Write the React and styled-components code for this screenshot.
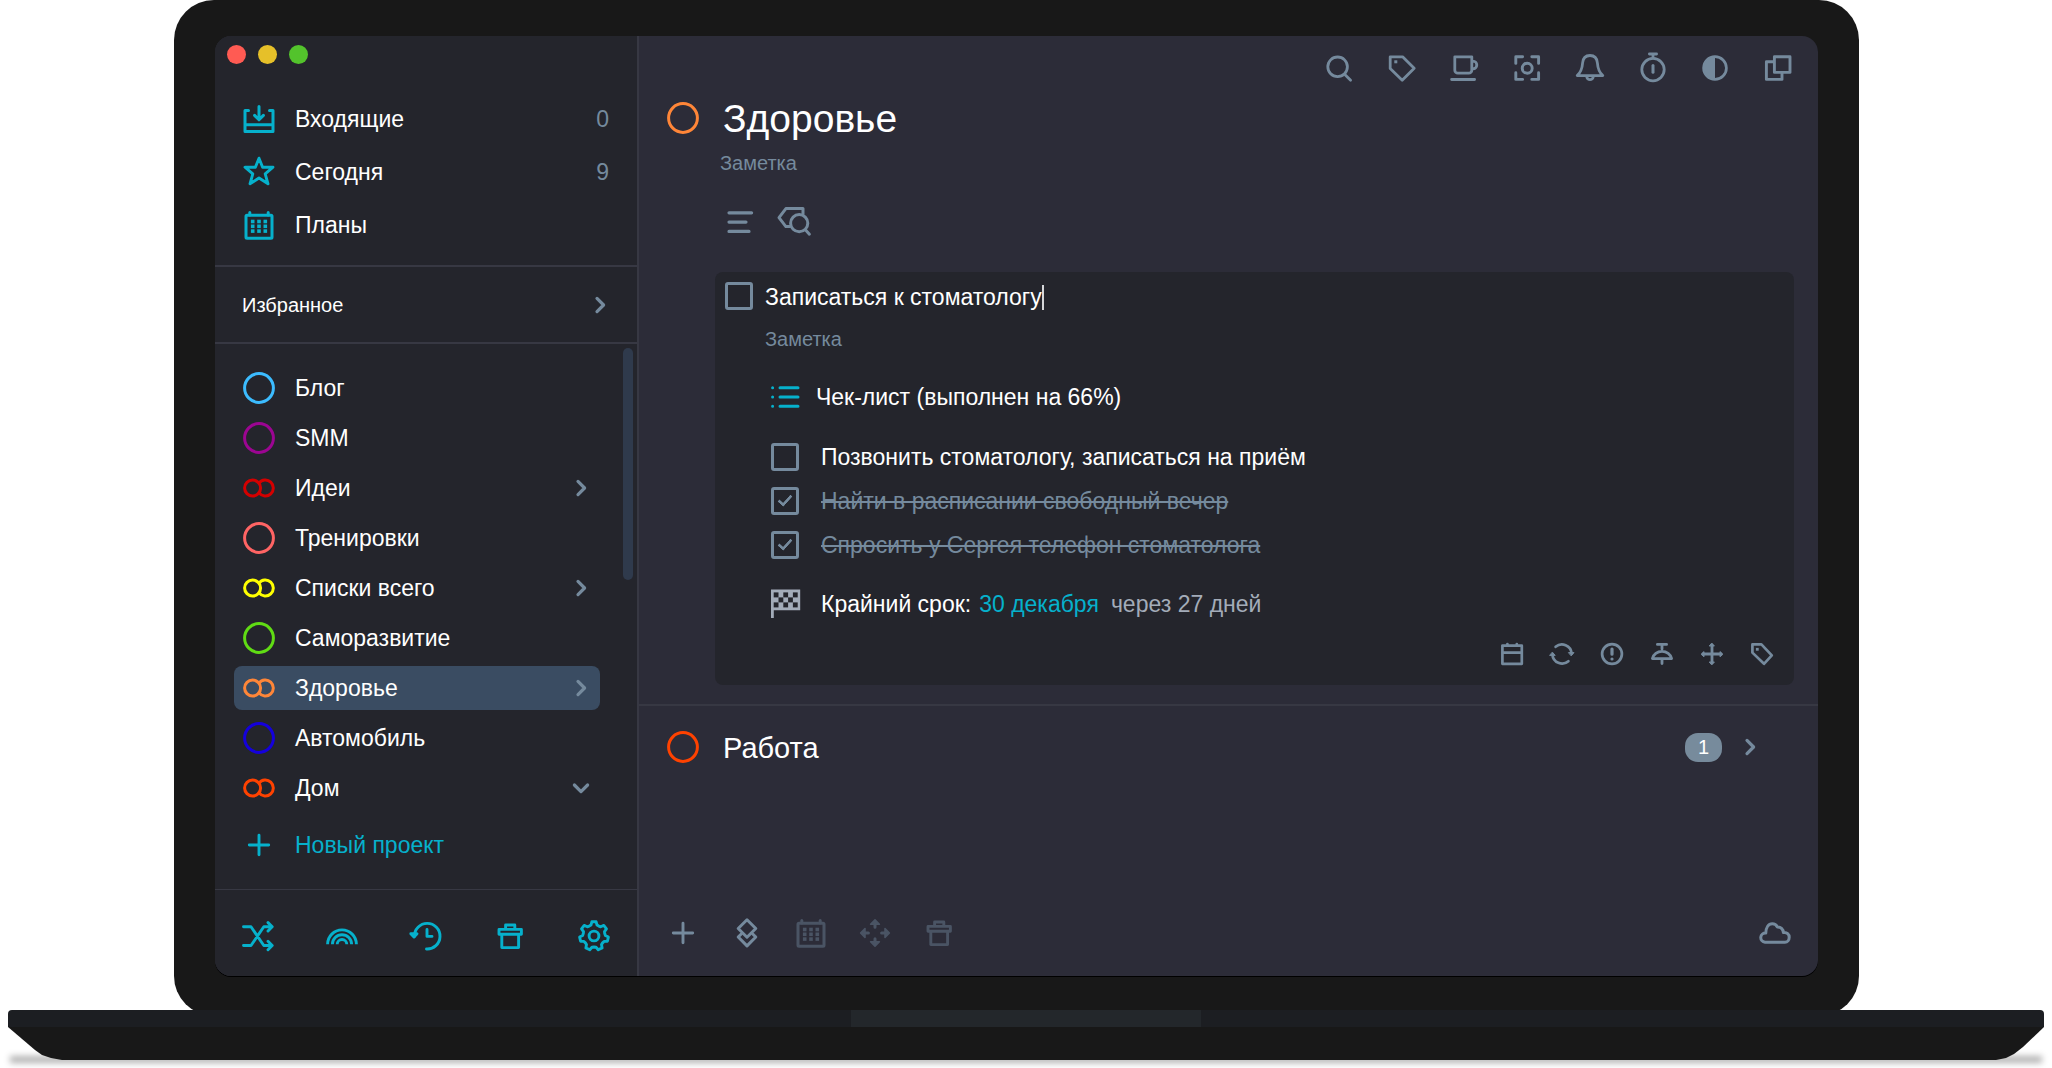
/**
 *
 * Planner window inside a laptop frame
 */

/* System imports */
import React, { useState } from 'react';
import styled, { createGlobalStyle, css } from 'styled-components';

const colors = {
  accent: '#06b1cc',
  muted: '#758a9d',
  disabled: '#4a5464',
  line: '#373843',
  sidebar: '#24252c',
  main: '#2c2c38',
  bezel: '#181818',
};

const GlobalStyle = createGlobalStyle`
  *, *::before, *::after {
    box-sizing: border-box;
  }

  body {
    margin: 0;
    background: #fff;
    color: #fff;
    font-family: 'Liberation Sans', Arial, Helvetica, sans-serif;
    font-size: 23px;
    line-height: 26px;
  }

  button, input {
    margin: 0;
    padding: 0;
    border: 0;
    background: none;
    color: inherit;
    font: inherit;
    outline: none;
  }

  button {
    cursor: pointer;
    text-align: left;
  }

  h1, h2, h3, p, ul {
    margin: 0;
    padding: 0;
    font-weight: normal;
    list-style: none;
  }
`;

/* Laptop */
const Laptop = styled.div`
  min-height: 100vh;
  padding-bottom: 8px;
  display: flex;
  flex-direction: column;
`;

const Lid = styled.div`
  flex: 1;
  display: flex;
  margin: 0 193px -6px 174px;
  padding: 36px 41px 40px;
  border-radius: 40px;
  background: ${colors.bezel};
`;

const Screen = styled.div`
  flex: 1;
  min-width: 0;
  display: flex;
  border-radius: 16px;
  overflow: hidden;
  background: ${colors.main};
  box-shadow: 0 1px 0 #000;
`;

const Base = styled.div`
  position: relative;
  margin: 0 8px;

  &::before {
    content: '';
    position: absolute;
    left: 2px;
    right: 2px;
    bottom: -3px;
    height: 7px;
    background: rgba(0, 0, 0, 0.3);
    filter: blur(3px);
  }
`;

const BaseTop = styled.div`
  position: relative;
  height: 17px;
  display: flex;
  justify-content: center;
  border-radius: 4px 4px 0 0;
  background: #1c1e22;
`;

const BaseNotch = styled.div`
  width: 350px;
  background: #23272b;
`;

const BaseBody = styled.div`
  position: relative;
  height: 33px;
  background: ${colors.bezel};
  clip-path: polygon(
    0 0, 27px 23px, 34px 28px, 43px 31px, 54px 33px,
    calc(100% - 48px) 33px, calc(100% - 38px) 31px, calc(100% - 30px) 27px, calc(100% - 21px) 20px, 100% 0
  );
`;

/* Sidebar */
const Sidebar = styled.aside`
  flex: none;
  width: 424px;
  display: flex;
  flex-direction: column;
  border-right: 2px solid ${colors.line};
  background: ${colors.sidebar};
`;

const TitleBar = styled.div`
  height: 56px;
  padding: 9px 12px;
  display: flex;
  gap: 12px;
`;

const Light = styled.button`
  width: 19px;
  height: 19px;
  border-radius: 50%;
  background: ${(props) => props.$color};
`;

const Nav = styled.nav`
  padding-bottom: 14px;
  border-bottom: 2px solid ${colors.line};
`;

const NavRow = styled.button`
  width: 100%;
  height: 53px;
  padding: 0 28px;
  display: flex;
  align-items: center;
  gap: 20px;
`;

const NavIcon = styled.span`
  color: ${colors.accent};
`;

const RowLabel = styled.span`
  flex: 1;
`;

const Count = styled.span`
  color: ${colors.muted};
`;

const Favorites = styled.button`
  height: 77px;
  padding: 0 25px 0 27px;
  display: flex;
  align-items: center;
  border-bottom: 2px solid ${colors.line};
  font-size: 20px;
`;

const Projects = styled.div`
  flex: 1;
  position: relative;
  padding: 22px 37px 22px 19px;
  display: flex;
  flex-direction: column;
  gap: 13px;
`;

const ProjectList = styled.ul`
  display: flex;
  flex-direction: column;
  gap: 6px;
`;

const ProjectRow = styled.button`
  width: 100%;
  height: 44px;
  padding: 0 7px 0 9px;
  display: flex;
  align-items: center;
  gap: 20px;
  border-radius: 8px;
  background: ${(props) => (props.$active ? '#3a4c62' : 'transparent')};
  color: ${(props) => (props.$accent ? colors.accent : 'inherit')};
`;

const ScrollThumb = styled.div`
  position: absolute;
  top: 4px;
  right: 4px;
  width: 10px;
  height: 232px;
  border-radius: 5px;
  background: #2f3a4c;
`;

const SidebarFooter = styled.footer`
  height: 87px;
  padding: 5px 27px 0;
  display: flex;
  align-items: center;
  justify-content: space-between;
  border-top: 1px solid ${colors.line};
  color: ${colors.accent};
`;

/* Main area */
const Main = styled.main`
  flex: 1;
  min-width: 0;
  display: flex;
  flex-direction: column;
`;

const IconButton = styled.button`
  display: flex;
  color: ${(props) => (props.disabled ? colors.disabled : 'inherit')};
`;

const TopBar = styled.div`
  height: 64px;
  padding-right: 24px;
  display: flex;
  align-items: center;
  justify-content: flex-end;
  color: ${colors.muted};
`;

const TopIcons = styled.div`
  width: 471px;
  display: flex;
  justify-content: space-between;
`;

const HeadRow = styled.div`
  height: 36px;
  padding: 0 56px 0 28px;
  display: flex;
  align-items: center;
`;

const Title = styled.h1`
  padding: 2px 0 0 24px;
  font-size: 39px;
  line-height: 36px;
`;

const Subtitle = styled.h2`
  flex: 1;
  padding: 2px 0 0 24px;
  font-size: 29px;
  line-height: 36px;
`;

const NoteInput = styled.input`
  display: block;
  height: 24px;
  font-size: 20px;
  line-height: 24px;

  &::placeholder {
    color: ${colors.muted};
    opacity: 1;
  }
`;

const ProjectNote = styled.div`
  padding: 15px 24px 0 81px;
`;

const ListTools = styled.div`
  margin-top: 31px;
  padding-left: 85px;
  display: flex;
  gap: 22px;
  color: ${colors.muted};
`;

const Card = styled.section`
  margin: 34px 24px 0 76px;
  padding: 10px 20px 19px 10px;
  border-radius: 8px;
  background: ${colors.sidebar};
`;

const TaskRow = styled.div`
  height: 28px;
  display: flex;
  align-items: center;
`;

const TaskInput = styled.input`
  margin-left: 12px;
  padding-top: 2px;
  field-sizing: content;
  height: 28px;
`;

const Caret = styled.span`
  align-self: flex-end;
  width: 2px;
  height: 25px;
  background: #d5d6d9;
`;

const CardBody = styled.div`
  padding: 17px 0 0 40px;
`;

const ChecklistTitle = styled.h3`
  margin: 30px 0 22px;
  padding-left: 4px;
  display: flex;
  align-items: center;
  gap: 15px;
  font-size: 23px;
`;

const CheckRow = styled.label`
  height: 44px;
  padding-left: 6px;
  display: flex;
  align-items: center;
  gap: 22px;
  ${(props) =>
    props.$done &&
    css`
      color: ${colors.muted};
      text-decoration: line-through;
    `}
`;

const Checkbox = styled.input`
  appearance: none;
  position: relative;
  flex: none;
  width: 28px;
  height: 28px;
  border: 3px solid ${colors.muted};
  border-radius: 3px;

  &:checked::after {
    content: '';
    position: absolute;
    left: 7px;
    top: 2px;
    width: 8px;
    height: 14px;
    border: solid ${colors.muted};
    border-width: 0 3px 3px 0;
    border-radius: 1px;
    transform: rotate(42deg);
  }
`;

const Deadline = styled.div`
  margin-top: 21px;
  padding-left: 4px;
  display: flex;
  align-items: center;
  color: #a3acb9;
`;

const DeadlineLabel = styled.span`
  margin-left: 20px;
  color: #fff;
`;

const DeadlineDate = styled.button`
  margin: 0 12px 0 8px;
  color: ${colors.accent};
`;

const CardTools = styled.div`
  margin-top: 22px;
  display: flex;
  justify-content: flex-end;
  gap: 26px;
  color: ${colors.muted};
`;

const NextProject = styled.section`
  margin-top: 19px;
  padding-top: 23px;
  border-top: 2px solid ${colors.line};
  color: #fff;
`;

const Badge = styled.span`
  width: 37px;
  height: 29px;
  margin-right: 16px;
  border-radius: 13px;
  background: #778b9c;
  font-size: 20px;
  line-height: 29px;
  text-align: center;
`;

const BottomBar = styled.footer`
  height: 87px;
  margin-top: auto;
  padding: 0 27px 0 28px;
  display: flex;
  align-items: center;
  gap: 32px;
  color: ${colors.muted};
`;

const Spacer = styled.span`
  flex: 1;
`;

const Svg = styled.svg`
  flex: none;
  display: block;
  overflow: visible;
  fill: none;
  stroke: currentColor;
  stroke-width: ${(props) => props.$stroke || 2.9};
  stroke-linecap: round;
  stroke-linejoin: round;
`;

const Icon = ({ size = 32, stroke, children, ...rest }) => (
  <Svg width={size} height={size} viewBox={`0 0 ${size} ${size}`} $stroke={stroke} aria-hidden="true" {...rest}>
    {children}
  </Svg>
);

const dots = (xs, ys, size) =>
  ys.map((y) =>
    xs.map((x) => (
      <rect key={`${x}-${y}`} x={x - size / 2} y={y - size / 2} width={size} height={size} fill="currentColor" stroke="none" />
    )),
  );

/* Seven teeth, two radii */
const gearPath = () => {
  const points = [];
  const at = (r, a) => `${(16 + r * Math.sin(a)).toFixed(2)} ${(16 - r * Math.cos(a)).toFixed(2)}`;
  for (let i = 0; i < 7; i += 1) {
    const a = (i * 2 * Math.PI) / 7;
    points.push(at(11.4, a - 0.27), at(14.4, a - 0.15), at(14.4, a + 0.15), at(11.4, a + 0.27));
    points.push(at(11, a + Math.PI / 7));
  }
  return `M${points.join('L')}Z`;
};

const Ring = ({ color }) => (
  <Icon stroke={3} color={color}>
    <circle cx="16" cy="16" r="14.4" />
  </Icon>
);

const DoubleRing = ({ color }) => (
  <Icon stroke={3} color={color}>
    <circle cx="9.6" cy="16" r="8" />
    <path d="M16 11.1A8 8 0 1 1 16 20.9" />
  </Icon>
);

const Chevron = ({ down }) => (
  <Icon size={24} stroke={3.2} color={colors.muted}>
    <path d={down ? 'M5.4 9L12 15.6L18.6 9' : 'M9 5.4L15.6 12L9 18.6'} />
  </Icon>
);

const InboxIcon = () => (
  <Icon stroke={3}>
    <path d="M5.5 7.5H2V28.6H30V7.5H26.5M2 21.8H30M16 3.5V16M11.6 12.4L16 16.8L20.4 12.4" />
  </Icon>
);

const StarIcon = () => (
  <Icon>
    <path d="M16 2.2L19.6 11.2H30L22.2 17.9L25 27.8L16 22L7 27.8L9.8 17.9L2 11.2H12.4Z" />
  </Icon>
);

const CalendarIcon = () => (
  <Icon stroke={3}>
    <rect x="3" y="6.2" width="26" height="23" rx="1" />
    <path d="M6.8 3.6V6M25.2 3.6V6" />
    {dots([9.7, 16, 22.3], [12.5, 17.3, 22.1], 3.6)}
  </Icon>
);

const PlusIcon = () => (
  <Icon>
    <path d="M16 6.3V25.7M6.3 16H25.7" />
  </Icon>
);

const ShuffleIcon = () => (
  <Icon>
    <path d="M1.5 6.8H9L21.8 25.5H30M1.5 25.5H9L21.8 6.8H30M26 2.6L30.2 6.8L26 11M26 21.3L30.2 25.5L26 29.7" />
  </Icon>
);

const RainbowIcon = () => (
  <Icon stroke={2.9}>
    <path strokeLinecap="butt" d="M1.6 24.3A14.4 14.4 0 0 1 30.4 24.3M6.4 24.3A9.6 9.6 0 0 1 25.6 24.3M11.2 24.3A4.8 4.8 0 0 1 20.8 24.3" />
  </Icon>
);

const HistoryIcon = () => (
  <Icon>
    <path d="M4.4 16.5A12.8 12.8 0 1 1 16.5 29M17 9.5V16.4H22" />
    <path d="M.8 13.8L4 17L7 13.8Z" fill="currentColor" />
  </Icon>
);

const TrashIcon = () => (
  <Icon>
    <path d="M5 9.4H27.4V14.2H5ZM7.8 14.2V27.6H24.6V14.2M11.6 9V5H20.8V9" />
  </Icon>
);

const GearIcon = () => (
  <Icon>
    <path d={gearPath()} />
    <circle cx="16" cy="16" r="4.9" />
  </Icon>
);

const SearchIcon = () => (
  <Icon stroke={2.8}>
    <circle cx="14.6" cy="14.8" r="9.8" />
    <path d="M21.8 22.4L27.6 28.2" />
  </Icon>
);

const TagIcon = () => (
  <Icon stroke={2.8}>
    <path d="M4.2 4.8H16.6L28.2 16.2L16.2 28.2L4.2 16.6Z" />
    {dots([9.8], [9.8], 3)}
  </Icon>
);

const CupIcon = () => (
  <Icon stroke={2.8}>
    <path d="M6.8 4.8H23.8V18.2A3 3 0 0 1 20.8 21.2H9.8A3 3 0 0 1 6.8 18.2ZM24 9.2H25A3.8 3.8 0 0 1 25 16.8H24M3.6 27.5H26.6" />
  </Icon>
);

const FocusIcon = () => (
  <Icon stroke={2.9}>
    <path d="M4.8 11.4V4.8H11.6M20.8 4.8H27.6V11.4M27.6 20.8V27.4H20.8M11.6 27.4H4.8V20.8" />
    <circle cx="16.2" cy="16.2" r="5" />
  </Icon>
);

const BellIcon = () => (
  <Icon stroke={2.8}>
    <path d="M3.2 23.6C7.4 19.8 8.2 16.6 8.6 11C9 6.4 11.6 3.5 16 3.5C20.4 3.5 23 6.4 23.4 11C23.8 16.6 24.6 19.8 28.8 23.6ZM12.8 25A3.3 3.6 0 0 0 19.2 25" />
  </Icon>
);

const TimerIcon = () => (
  <Icon stroke={2.8}>
    <circle cx="16" cy="17.6" r="11.2" />
    <path d="M12.4 2H19.6M16 2V6" />
    <path d="M16 13.6V20.2" strokeWidth="3" />
  </Icon>
);

const ContrastIcon = () => (
  <Icon stroke={2.7}>
    <circle cx="16" cy="16" r="11.4" />
    <path d="M16 4.6A11.4 11.4 0 0 0 16 27.4Z" fill="currentColor" stroke="none" />
  </Icon>
);

const WindowsIcon = () => (
  <Icon stroke={2.9}>
    <rect x="12.4" y="4.8" width="15.6" height="15.6" />
    <path d="M11.6 9.8H4.4V27.4H20V21" />
  </Icon>
);

const LinesIcon = () => (
  <Icon stroke={3.2}>
    <path d="M5 6.8H27.6M5 16.1H22M5 25.4H25" />
  </Icon>
);

const TagSearchIcon = () => (
  <Icon stroke={3}>
    <path d="M25 8V2.6H7.9L1 11.6L7.9 20.6H11.6" />
    <circle cx="21.2" cy="17.2" r="8.6" />
    <path d="M27.6 24L31.4 28.2" />
  </Icon>
);

const ListIcon = () => (
  <Icon stroke={3} color={colors.accent}>
    <path d="M11 6.7H29M11 16H29M11 25.3H29M3.6 6.7V6.7M3.6 16V16M3.6 25.3V25.3" />
  </Icon>
);

const FlagIcon = () => (
  <Icon color="#a3acb9">
    <path d="M2 1.6H31.2V22.2H4.8V30H2Z" fill="currentColor" stroke="none" />
    {[0, 1, 2].map((row) =>
      (row === 1 ? [1, 3] : [0, 2, 4]).map((col) => (
        <rect
          key={`${row}-${col}`}
          x={4.7 + col * 4.8}
          y={4.4 + row * 5}
          width="4.8"
          height="5"
          fill={colors.sidebar}
          stroke="none"
        />
      )),
    )}
  </Icon>
);

const DateIcon = () => (
  <Icon size={24} stroke={2.7}>
    <path d="M2.4 3.6H21.8V21.8H2.4ZM2.4 10.6H21.8M7.4 2V3M16.8 2V3" />
  </Icon>
);

const RepeatIcon = () => (
  <Icon size={24} stroke={2.7}>
    <path d="M5.6 4.8A9.7 9.7 0 0 1 21.6 11.4M18.4 19.2A9.7 9.7 0 0 1 2.4 12.6" />
    <path d="M18.8 10.6H24L21.4 13.6ZM0 13.4H5.2L2.6 10.4Z" fill="currentColor" strokeWidth="1" />
  </Icon>
);

const AlertIcon = () => (
  <Icon size={24} stroke={2.7}>
    <circle cx="12" cy="12" r="9.9" />
    <path d="M12 7V12.2M12 17V17" strokeWidth="3.2" />
  </Icon>
);

const LampIcon = () => (
  <Icon size={24} stroke={2.8}>
    <path d="M7.4 2.4H16.6M12 2.4V7M2.4 16.6A9.8 9 0 0 1 21.6 16.6ZM12 17V21.6" />
  </Icon>
);

const MoveIcon = () => (
  <Icon size={24} stroke={2.8}>
    <path d="M12 3V21M3 12H21" />
    <path
      d="M12 1.4L14.4 4H9.6ZM12 22.6L14.4 20H9.6ZM1.4 12L4 9.6V14.4ZM22.6 12L20 9.6V14.4Z"
      fill="currentColor"
      strokeWidth="1"
    />
  </Icon>
);

const SmallTagIcon = () => (
  <Icon size={24} stroke={2.7}>
    <path d="M2.4 2.4H11.4L21.8 13.4L14 21.8L2.4 10.6Z" />
    {dots([7.3], [7.3], 2.8)}
  </Icon>
);

const LayersIcon = () => (
  <Icon stroke={3}>
    <path d="M16 2.8L24.8 11.5L16 20.2L7.2 11.5ZM10 17.2L7.2 20L16 28.9L24.8 20L22 17.2" />
  </Icon>
);

const ArrowsIcon = () => (
  <Icon stroke={1.6}>
    <path
      d="M16 2.8L20.4 7.2H11.6ZM16 29.2L20.4 24.8H11.6ZM1.6 16L6 11.6V20.4ZM30.4 16L26 11.6V20.4Z"
      fill="currentColor"
    />
    <path d="M16 7V10.2M16 25V21.8M6 16H9.4M26 16H22.6" strokeWidth="3" />
  </Icon>
);

const CloudIcon = () => (
  <Icon stroke={3}>
    <path d="M6 25.2A4.6 4.6 0 0 1 6.8 16C7 10.6 9.4 6.8 13.2 6.8C15.6 6.8 17.4 8 18.4 10C21.6 9.8 24.2 12.2 24.4 15.6C28 15 30.2 17.4 30.2 20.2C30.2 23 28.4 25.2 26 25.2Z" />
  </Icon>
);

const projects = [
  { name: 'Блог', color: '#3cbcff' },
  { name: 'SMM', color: '#9c0592' },
  { name: 'Идеи', color: '#d40000', nested: true },
  { name: 'Тренировки', color: '#ff6464' },
  { name: 'Списки всего', color: '#ffff00', nested: true },
  { name: 'Саморазвитие', color: '#60dc14' },
  { name: 'Здоровье', color: '#ff8638', nested: true },
  { name: 'Автомобиль', color: '#1400dc' },
  { name: 'Дом', color: '#ff4200', nested: true, open: true },
];

const topTools = [
  ['Поиск', SearchIcon],
  ['Метки', TagIcon],
  ['Перерыв', CupIcon],
  ['Фокус', FocusIcon],
  ['Напоминания', BellIcon],
  ['Таймер', TimerIcon],
  ['Тема', ContrastIcon],
  ['Окна', WindowsIcon],
];

const sidebarTools = [
  ['Перемешать', ShuffleIcon],
  ['Радуга', RainbowIcon],
  ['История', HistoryIcon],
  ['Корзина', TrashIcon],
  ['Настройки', GearIcon],
];

const cardTools = [
  ['Дата', DateIcon],
  ['Повтор', RepeatIcon],
  ['Важность', AlertIcon],
  ['Приоритет', LampIcon],
  ['Переместить', MoveIcon],
  ['Метка', SmallTagIcon],
];

const renderTools = (tools) =>
  tools.map(([label, Glyph]) => (
    <IconButton key={label} type="button" aria-label={label}>
      <Glyph />
    </IconButton>
  ));

const AppSidebar = ({ active, onSelect }) => (
  <Sidebar>
    <TitleBar>
      <Light type="button" aria-label="Закрыть" $color="#ff5b53" />
      <Light type="button" aria-label="Свернуть" $color="#e6c029" />
      <Light type="button" aria-label="Развернуть" $color="#53c32c" />
    </TitleBar>
    <Nav>
      {[
        ['Входящие', InboxIcon, 0],
        ['Сегодня', StarIcon, 9],
        ['Планы', CalendarIcon],
      ].map(([label, Glyph, count]) => (
        <NavRow key={label} type="button">
          <NavIcon><Glyph /></NavIcon>
          <RowLabel>{label}</RowLabel>
          {count !== undefined && <Count>{count}</Count>}
        </NavRow>
      ))}
    </Nav>
    <Favorites type="button">
      <RowLabel>Избранное</RowLabel>
      <Chevron />
    </Favorites>
    <Projects>
      <ProjectList>
        {projects.map(({ name, color, nested, open }) => (
          <li key={name}>
            <ProjectRow type="button" $active={name === active} onClick={() => onSelect(name)}>
              {nested ? <DoubleRing color={color} /> : <Ring color={color} />}
              <RowLabel>{name}</RowLabel>
              {nested && <Chevron down={open} />}
            </ProjectRow>
          </li>
        ))}
      </ProjectList>
      <ProjectRow type="button" $accent>
        <PlusIcon />
        <RowLabel>Новый проект</RowLabel>
      </ProjectRow>
      <ScrollThumb />
    </Projects>
    <SidebarFooter>{renderTools(sidebarTools)}</SidebarFooter>
  </Sidebar>
);

const TaskCard = () => {
  const [title, setTitle] = useState('Записаться к стоматологу');
  const [items, setItems] = useState([
    { text: 'Позвонить стоматологу, записаться на приём', done: false },
    { text: 'Найти в расписании свободный вечер', done: true },
    { text: 'Спросить у Сергея телефон стоматолога', done: true },
  ]);

  const toggle = (index) =>
    setItems(items.map((item, i) => (i === index ? { ...item, done: !item.done } : item)));

  return (
    <Card>
      <TaskRow>
        <Checkbox type="checkbox" aria-label="Выполнено" />
        <TaskInput aria-label="Задача" value={title} onChange={(e) => setTitle(e.target.value)} />
        <Caret />
      </TaskRow>
      <CardBody>
        <NoteInput aria-label="Заметка к задаче" placeholder="Заметка" />
        <ChecklistTitle>
          <ListIcon />
          Чек-лист (выполнен на 66%)
        </ChecklistTitle>
        {items.map(({ text, done }, index) => (
          <CheckRow key={text} $done={done}>
            <Checkbox type="checkbox" checked={done} onChange={() => toggle(index)} />
            <span>{text}</span>
          </CheckRow>
        ))}
        <Deadline>
          <FlagIcon />
          <DeadlineLabel>Крайний срок:</DeadlineLabel>
          <DeadlineDate type="button">30 декабря</DeadlineDate>
          <span>через 27 дней</span>
        </Deadline>
      </CardBody>
      <CardTools>{renderTools(cardTools)}</CardTools>
    </Card>
  );
};

const App = () => {
  const [active, setActive] = useState('Здоровье');

  return (
    <Laptop>
      <GlobalStyle />
      <Lid>
        <Screen>
          <AppSidebar active={active} onSelect={setActive} />
          <Main>
            <TopBar>
              <TopIcons>{renderTools(topTools)}</TopIcons>
            </TopBar>
            <HeadRow>
              <Ring color="#ff8638" />
              <Title>Здоровье</Title>
            </HeadRow>
            <ProjectNote>
              <NoteInput aria-label="Заметка к проекту" placeholder="Заметка" />
            </ProjectNote>
            <ListTools>
              <IconButton type="button" aria-label="Вид списка"><LinesIcon /></IconButton>
              <IconButton type="button" aria-label="Фильтр по меткам"><TagSearchIcon /></IconButton>
            </ListTools>
            <TaskCard />
            <NextProject>
              <HeadRow>
                <Ring color="#ff4200" />
                <Subtitle>Работа</Subtitle>
                <Badge>1</Badge>
                <IconButton type="button" aria-label="Открыть проект"><Chevron /></IconButton>
              </HeadRow>
            </NextProject>
            <BottomBar>
              <IconButton type="button" aria-label="Добавить"><PlusIcon /></IconButton>
              <IconButton type="button" aria-label="Слои"><LayersIcon /></IconButton>
              <IconButton type="button" aria-label="Запланировать" disabled><CalendarIcon /></IconButton>
              <IconButton type="button" aria-label="Переместить" disabled><ArrowsIcon /></IconButton>
              <IconButton type="button" aria-label="Удалить" disabled><TrashIcon /></IconButton>
              <Spacer />
              <IconButton type="button" aria-label="Синхронизация"><CloudIcon /></IconButton>
            </BottomBar>
          </Main>
        </Screen>
      </Lid>
      <Base>
        <BaseTop>
          <BaseNotch />
        </BaseTop>
        <BaseBody />
      </Base>
    </Laptop>
  );
};

export default App;
